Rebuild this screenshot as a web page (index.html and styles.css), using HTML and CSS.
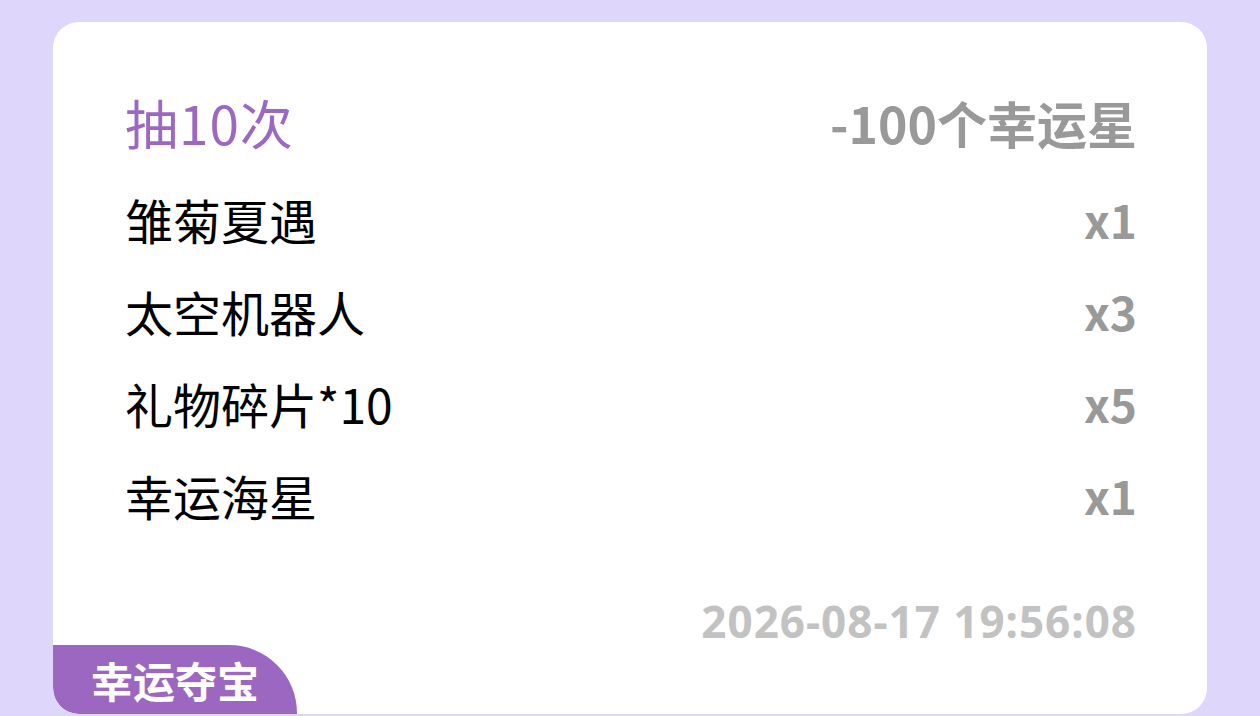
FILE: index.html
```html
<!DOCTYPE html>
<html lang="zh-CN">
<head>
<meta charset="utf-8">
<link rel="stylesheet" href="styles.css">
</head>
<body>
<div class="card">
  <div class="head">
    <span class="head-title">抽10次</span>
    <span class="head-cost">-100个幸运星</span>
  </div>
  <ul class="items">
    <li class="item"><span class="item-name">雏菊夏遇</span><span class="item-qty">x1</span></li>
    <li class="item"><span class="item-name">太空机器人</span><span class="item-qty">x3</span></li>
    <li class="item"><span class="item-name">礼物碎片*10</span><span class="item-qty">x5</span></li>
    <li class="item"><span class="item-name">幸运海星</span><span class="item-qty">x1</span></li>
  </ul>
  <div class="time">2026-08-17 19:56:08</div>
  <div class="tag">幸运夺宝</div>
</div>
</body>
</html>
```

FILE: styles.css
```css
* { box-sizing: border-box; }
html, body { margin: 0; padding: 0; }
body {
  background: #dfd6fc;
  width: 1260px;
  height: 716px;
  padding: 22px 53px 0 53px;
  font-family: "Noto Sans CJK SC", "Noto Sans", sans-serif;
  overflow: hidden;
}
.card {
  background: #ffffff;
  border-radius: 26px;
  height: 692px;
  display: flex;
  flex-direction: column;
  padding-top: 54px;
  overflow: hidden;
}
.head {
  display: flex;
  justify-content: space-between;
  align-items: center;
  height: 92px;
  padding: 0 70px 0 72px;
  flex-shrink: 0;
}
.head-title {
  color: #9c68c0;
  font-size: 53px;
  line-height: 92px;
  letter-spacing: 1px;
}
.head-cost {
  color: #999999;
  font-size: 50px;
  font-weight: 700;
  line-height: 92px;
}
.items {
  list-style: none;
  margin: 5px 0 0 0;
  padding: 0 70px 0 72px;
  flex-shrink: 0;
}
.item {
  display: flex;
  justify-content: space-between;
  align-items: center;
  height: 92px;
}
.item-name {
  color: #000000;
  font-size: 48px;
  line-height: 92px;
}
.item-qty {
  color: #999999;
  font-size: 46px;
  font-weight: 700;
  line-height: 92px;
}
.time {
  margin-top: 56px;
  padding: 0 70px 0 72px;
  text-align: right;
  color: #c2c2c2;
  font-family: "Noto Sans", sans-serif;
  font-size: 44px;
  font-weight: 700;
  letter-spacing: 1px;
  line-height: 48px;
  flex-shrink: 0;
}
.tag {
  margin-top: auto;
  align-self: flex-start;
  flex-shrink: 0;
  width: 244px;
  height: 69px;
  background: #9c67c0;
  color: #ffffff;
  border-radius: 0 68px 0 26px;
  font-size: 42px;
  font-weight: 700;
  line-height: 69px;
  padding-left: 38px;
}
```
